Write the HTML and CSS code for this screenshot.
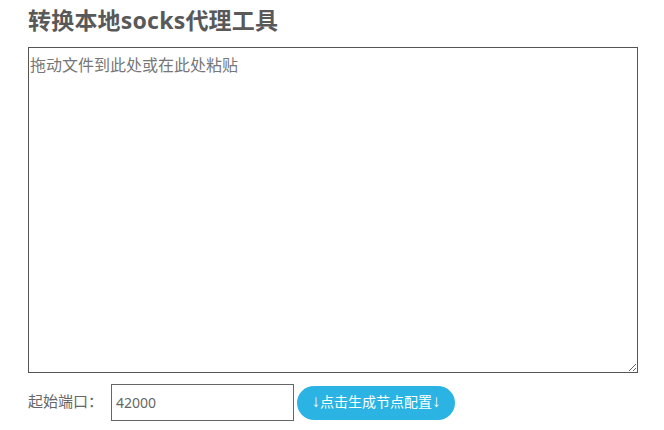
FILE: index.html
```html
<!DOCTYPE html>
<html lang="zh-CN">
<head>
<meta charset="utf-8">
<title>转换本地socks代理工具</title>
<link rel="stylesheet" href="styles.css">
</head>
<body>
<div class="page">
  <h1 class="title">转换本地socks代理工具</h1>
  <textarea class="drop" placeholder="拖动文件到此处或在此处粘贴"></textarea>
  <div class="row">
    <label class="label" for="port">起始端口：</label>
    <input class="port" id="port" type="text" value="42000">
    <button class="btn" type="button"><span class="arrow">↓</span>点击生成节点配置<span class="arrow">↓</span></button>
  </div>
</div>
</body>
</html>
```
FILE: styles.css
```css
html, body {
  margin: 0;
  padding: 0;
  background: #fff;
}
body {
  font-family: "Noto Sans", "Noto Sans CJK SC", sans-serif;
  color: #555;
}
.page {
  padding: 0 26px 0 28px;
}
.title {
  margin: 0;
  padding-top: 3px;
  height: 44px;
  font-size: 23px;
  font-weight: 700;
  line-height: 34px;
  letter-spacing: 0.2px;
  color: #595959;
}
.drop {
  display: block;
  box-sizing: border-box;
  width: 610px;
  height: 326px;
  margin: 0;
  padding: 4px 1px;
  border: 1px solid #555;
  border-radius: 0;
  font-family: "Noto Sans CJK SC", sans-serif;
  font-size: 16px;
  line-height: 24px;
  color: #333;
  resize: both;
  outline: none;
}
.drop::placeholder {
  color: #777;
}
.row {
  display: flex;
  align-items: center;
  margin-top: 11px;
}
.label {
  font-family: "Noto Sans CJK SC", sans-serif;
  font-size: 15px;
  line-height: 20px;
  color: #666;
  width: 83px;
  padding-bottom: 4px;
}
.port {
  box-sizing: border-box;
  width: 183px;
  height: 37px;
  margin: 0;
  padding: 0 4px;
  border: 1px solid #666;
  border-radius: 0;
  font-family: "Noto Sans", sans-serif;
  font-size: 14px;
  color: #666;
  outline: none;
}
.btn {
  box-sizing: border-box;
  width: 158px;
  height: 34px;
  margin-left: 3px;
  border: none;
  border-radius: 17px;
  background: #2bb4e3;
  color: #fff;
  font-family: "Noto Sans CJK SC", sans-serif;
  font-size: 14px;
  line-height: 20px;
  padding: 0 0 3px;
}
.arrow {
  font-family: "Liberation Sans", "DejaVu Sans", sans-serif;
  font-weight: 700;
  font-size: 17px;
  line-height: 1;
}
```
